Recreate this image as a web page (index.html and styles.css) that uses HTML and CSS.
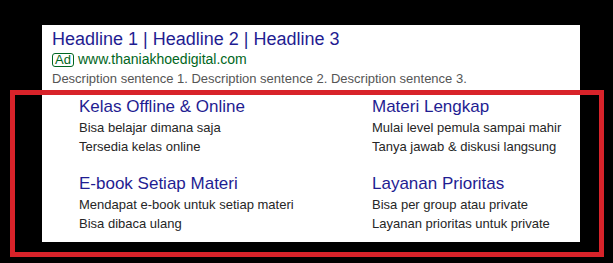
FILE: index.html
```html
<!DOCTYPE html>
<html lang="en">
<head>
    <meta charset="UTF-8">
    <meta name="viewport" content="width=device-width, initial-scale=1.0">
    <title>Ad Preview - Sitelinks</title>
    <link rel="stylesheet" href="styles.css">
</head>
<body>
    <div class="ad-card">
        <div class="ad-head">
            <a href="#" class="headline">Headline 1 | Headline 2 | Headline 3</a>
            <div class="ad-url">
                <span class="ad-badge">Ad</span>
                <span>www.thaniakhoedigital.com</span>
            </div>
            <p class="ad-desc">Description sentence 1. Description sentence 2. Description sentence 3.</p>
        </div>

        <div class="sitelinks">
            <div class="sitelink">
                <a href="#">Kelas Offline &amp; Online</a>
                <p>Bisa belajar dimana saja</p>
                <p>Tersedia kelas online</p>
            </div>
            <div class="sitelink">
                <a href="#">Materi Lengkap</a>
                <p>Mulai level pemula sampai mahir</p>
                <p>Tanya jawab &amp; diskusi langsung</p>
            </div>
            <div class="sitelink">
                <a href="#">E-book Setiap Materi</a>
                <p>Mendapat e-book untuk setiap materi</p>
                <p>Bisa dibaca ulang</p>
            </div>
            <div class="sitelink">
                <a href="#">Layanan Prioritas</a>
                <p>Bisa per group atau private</p>
                <p>Layanan prioritas untuk private</p>
            </div>
        </div>
    </div>

    <!-- highlight box drawn over the sitelinks -->
    <div class="highlight"></div>
</body>
</html>
```

FILE: styles.css
```css
* {
    margin: 0;
    padding: 0;
    box-sizing: border-box;
}

body {
    font-family: 'Liberation Sans', Arial, sans-serif;
    background: #000;
    width: 613px;
    height: 263px;
    padding-top: 25px;
    padding-left: 42px;
    position: relative;
    overflow: hidden;
}

.ad-card {
    background: #fff;
    width: 538px;
    height: 217px;
    padding: 3px 10px 0 10px;
}

.headline {
    display: block;
    font-size: 18px;
    line-height: 22px;
    color: #1f1d92;
    text-decoration: none;
}

.ad-url {
    display: flex;
    align-items: center;
    gap: 4px;
    font-size: 14px;
    line-height: 19px;
    color: #006621;
}

.ad-badge {
    border: 1px solid #006621;
    border-radius: 3px;
    font-size: 13px;
    line-height: 12px;
    padding: 0 2px;
}

.ad-desc {
    font-size: 13px;
    line-height: 19px;
    color: #555;
}

.sitelinks {
    display: grid;
    grid-template-columns: 293px 1fr;
    row-gap: 16px;
    padding: 7px 0 0 27px;
}

.sitelink a {
    display: block;
    font-size: 17px;
    line-height: 23px;
    color: #1f1d92;
    text-decoration: none;
}

.sitelink p {
    font-size: 13px;
    line-height: 19px;
    color: #262626;
}

.highlight {
    position: absolute;
    left: 10px;
    top: 90px;
    width: 594px;
    height: 167px;
    border: 5px solid #d8232a;
}
```
